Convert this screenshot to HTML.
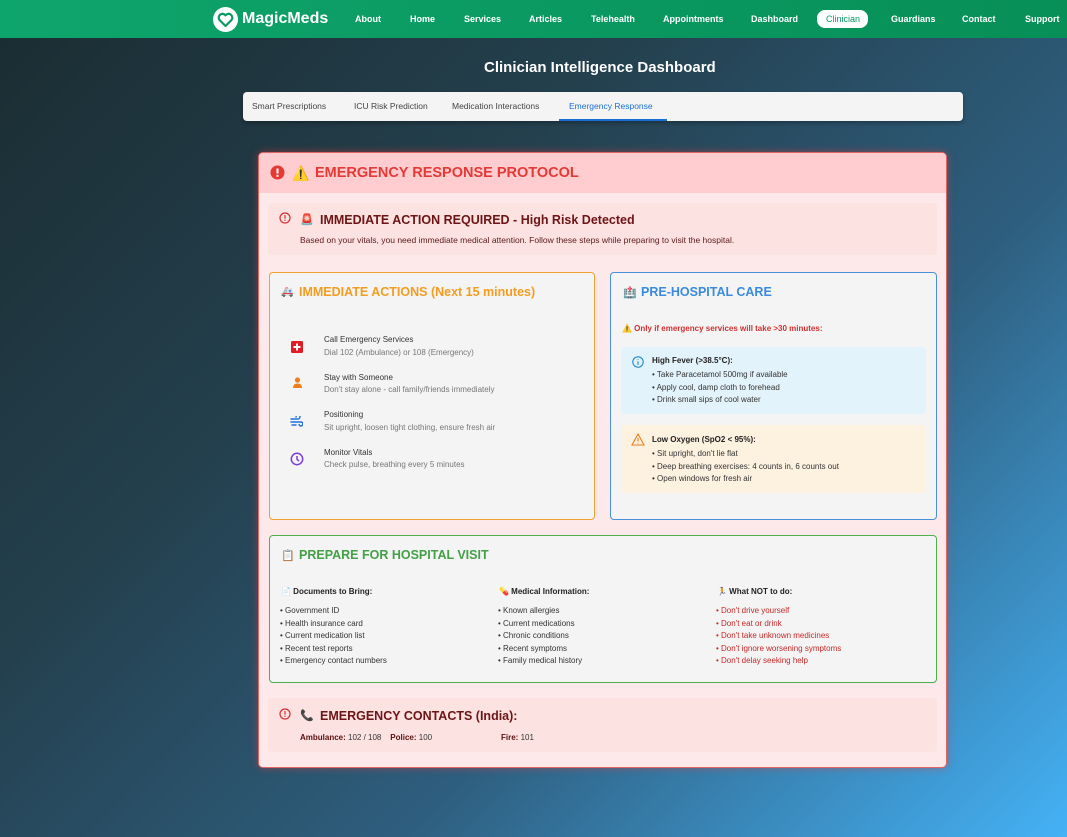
<!DOCTYPE html>
<html><head><meta charset="utf-8"><style>
*{margin:0;padding:0;box-sizing:border-box}
body{width:1067px;height:837px;overflow:hidden;font-family:"Liberation Sans","DejaVu Sans",sans-serif;background:linear-gradient(135deg,#1a2c31 0%,#24404e 35%,#2e5e7e 65%,#45b2f6 100%);position:relative;color:#333}
.a{position:absolute;white-space:nowrap}
.hdr{position:absolute;left:0;top:0;width:1067px;height:38px;background:linear-gradient(90deg,#0ea56c,#078f57)}
.nav{font-size:9px;font-weight:bold;color:#fff;top:14px}
.tabs{left:243px;top:92px;width:720px;height:29px;background:#f4f4f4;border-radius:4px;box-shadow:0 2px 4px rgba(0,0,0,.3)}
.tab{font-size:8.5px;color:#444;top:101px}
.card{left:258px;top:152px;width:689px;height:616px;background:#fde9e9;border:1px solid #e06565;border-radius:5px;box-shadow:0 0 8px rgba(230,60,60,.5);overflow:hidden}
.box{border-radius:4px;background:#f4f4f4}
.it{font-size:8px;color:#333}
.sub{font-size:8px;color:#777}
.li{font-size:8px;color:#333;line-height:12.5px}
</style></head><body>
<div class="hdr"></div>
<svg class="a" style="left:213px;top:7px" width="25" height="25" viewBox="0 0 25 25"><circle cx="12.5" cy="12.5" r="12.5" fill="#fff"/><path d="M12.5 19 L6.5 13 A3.4 3.4 0 0 1 12.5 8.3 A3.4 3.4 0 0 1 18.5 13 Z" fill="none" stroke="#0a9a62" stroke-width="2.2" stroke-linejoin="round"/></svg>
<div class="a" style="left:242px;top:10px;font-size:16px;font-weight:bold;color:#fff">MagicMeds</div>
<div class="a nav" style="left:355px">About</div>
<div class="a nav" style="left:410px">Home</div>
<div class="a nav" style="left:464px">Services</div>
<div class="a nav" style="left:529px">Articles</div>
<div class="a nav" style="left:591px">Telehealth</div>
<div class="a nav" style="left:663px">Appointments</div>
<div class="a nav" style="left:751px">Dashboard</div>
<div class="a" style="left:817px;top:10px;width:51px;height:18px;background:#fff;border-radius:8px"></div>
<div class="a nav" style="left:826px;color:#0a9a62;font-weight:normal">Clinician</div>
<div class="a nav" style="left:891px">Guardians</div>
<div class="a nav" style="left:962px">Contact</div>
<div class="a nav" style="left:1025px">Support</div>
<div class="a" style="left:484px;top:59px;font-size:15px;font-weight:bold;color:#fff">Clinician Intelligence Dashboard</div>
<div class="a tabs"></div>
<div class="a tab" style="left:252px">Smart Prescriptions</div>
<div class="a tab" style="left:354px">ICU Risk Prediction</div>
<div class="a tab" style="left:452px">Medication Interactions</div>
<div class="a tab" style="left:569px;color:#1a6fd6">Emergency Response</div>
<div class="a" style="left:559px;top:119px;width:108px;height:2px;background:#1a6fd6"></div>

<div class="a card">
 <div class="a" style="left:0;top:0;width:689px;height:40px;background:#ffcdd0"></div>
</div>
<svg class="a" style="left:270px;top:165px" width="15" height="15"><circle cx="7.5" cy="7.5" r="7" fill="#e53935"/><rect x="6.5" y="3.5" width="2" height="5" fill="#fff"/><rect x="6.5" y="9.8" width="2" height="2" fill="#fff"/></svg>
<div class="a" style="left:292px;top:165px;font-size:14px">⚠️</div>
<div class="a" style="left:315px;top:165px;font-size:14.5px;font-weight:bold;color:#e53935">EMERGENCY RESPONSE PROTOCOL</div>

<div class="a" style="left:268px;top:203px;width:669px;height:52px;background:#fde2e2;border-radius:4px"></div>
<svg class="a" style="left:279px;top:212px" width="12" height="12"><circle cx="6" cy="6" r="5" fill="none" stroke="#d32f2f" stroke-width="1.2"/><rect x="5.4" y="3" width="1.2" height="3.6" fill="#d32f2f"/><rect x="5.4" y="7.6" width="1.2" height="1.2" fill="#d32f2f"/></svg>
<div class="a" style="left:300px;top:213px;font-size:11px">🚨</div>
<div class="a" style="left:320px;top:213px;font-size:12.5px;font-weight:bold;color:#6d1414">IMMEDIATE ACTION REQUIRED - High Risk Detected</div>
<div class="a" style="left:300px;top:235px;font-size:8.5px;color:#5a1a1a">Based on your vitals, you need immediate medical attention. Follow these steps while preparing to visit the hospital.</div>

<div class="a box" style="left:269px;top:272px;width:326px;height:248px;border:1px solid #f0a030"></div>
<div class="a" style="left:281px;top:287px;font-size:10px">🚑</div>
<div class="a" style="left:299px;top:285px;font-size:12.5px;font-weight:bold;color:#f39c1f">IMMEDIATE ACTIONS (Next 15 minutes)</div>
<svg class="a" style="left:291px;top:341px" width="12" height="12"><rect width="12" height="12" rx="1.5" fill="#e01b24"/><rect x="5" y="2.5" width="2" height="7" fill="#fff"/><rect x="2.5" y="5" width="7" height="2" fill="#fff"/></svg>
<div class="a it" style="left:324px;top:335px">Call Emergency Services</div>
<div class="a sub" style="left:324px;top:348px">Dial 102 (Ambulance) or 108 (Emergency)</div>
<svg class="a" style="left:292px;top:377px" width="11" height="11"><circle cx="5.5" cy="3" r="2.6" fill="#ef7d1a"/><path d="M1 11 Q1 6.5 5.5 6.5 Q10 6.5 10 11Z" fill="#ef7d1a"/></svg>
<div class="a it" style="left:324px;top:373px">Stay with Someone</div>
<div class="a sub" style="left:324px;top:385px">Don't stay alone - call family/friends immediately</div>
<svg class="a" style="left:290px;top:416px" width="13" height="11" fill="none" stroke="#1e6fe0" stroke-width="1.4" stroke-linecap="round"><path d="M1 3H8A2 2 0 1 0 6 1"/><path d="M1 6H11A2 2 0 1 1 9 8.5"/><path d="M2 9H6"/></svg>
<div class="a it" style="left:324px;top:410px">Positioning</div>
<div class="a sub" style="left:324px;top:423px">Sit upright, loosen tight clothing, ensure fresh air</div>
<svg class="a" style="left:290px;top:452px" width="14" height="14" fill="none" stroke="#7b3fd6" stroke-width="1.5"><circle cx="7" cy="7" r="5.7"/><path d="M7 4V7.3L9 9"/></svg>
<div class="a it" style="left:324px;top:448px">Monitor Vitals</div>
<div class="a sub" style="left:324px;top:460px">Check pulse, breathing every 5 minutes</div>

<div class="a box" style="left:610px;top:272px;width:327px;height:248px;border:1px solid #4a8fd9"></div>
<div class="a" style="left:623px;top:286px;font-size:11px">🏥</div>
<div class="a" style="left:641px;top:285px;font-size:12.5px;font-weight:bold;color:#3a8be0">PRE-HOSPITAL CARE</div>
<div class="a" style="left:622px;top:324px;font-size:8px;font-weight:bold;color:#d32f2f">⚠️ Only if emergency services will take &gt;30 minutes:</div>
<div class="a" style="left:621px;top:347px;width:305px;height:67px;background:#e3f3fb;border-radius:4px"></div>
<svg class="a" style="left:632px;top:356px" width="12" height="12" fill="none" stroke="#1e88d0" stroke-width="1.1"><circle cx="6" cy="6" r="5.2"/><path d="M6 5.2V9M6 3V3.8"/></svg>
<div class="a" style="left:652px;top:356px;font-size:8px;font-weight:bold;color:#222">High Fever (&gt;38.5°C):</div>
<div class="a li" style="left:652px;top:369px">• Take Paracetamol 500mg if available<br>• Apply cool, damp cloth to forehead<br>• Drink small sips of cool water</div>
<div class="a" style="left:621px;top:425px;width:305px;height:68px;background:#fdf1e0;border-radius:4px"></div>
<svg class="a" style="left:631px;top:433px" width="14" height="13" fill="none" stroke="#ef7d1a" stroke-width="1.1"><path d="M7 1L13 12H1Z"/><path d="M7 5V8.5M7 9.7V10.5"/></svg>
<div class="a" style="left:652px;top:435px;font-size:8px;font-weight:bold;color:#222">Low Oxygen (SpO2 &lt; 95%):</div>
<div class="a li" style="left:652px;top:448px">• Sit upright, don't lie flat<br>• Deep breathing exercises: 4 counts in, 6 counts out<br>• Open windows for fresh air</div>

<div class="a box" style="left:269px;top:535px;width:668px;height:148px;border:1px solid #4caf50"></div>
<div class="a" style="left:281px;top:549px;font-size:11px">📋</div>
<div class="a" style="left:299px;top:548px;font-size:12.5px;font-weight:bold;color:#43a047">PREPARE FOR HOSPITAL VISIT</div>
<div class="a" style="left:281px;top:587px;font-size:8px;font-weight:bold;color:#222">📄 Documents to Bring:</div>
<div class="a li" style="left:280px;top:605px">• Government ID<br>• Health insurance card<br>• Current medication list<br>• Recent test reports<br>• Emergency contact numbers</div>
<div class="a" style="left:499px;top:587px;font-size:8px;font-weight:bold;color:#222">💊 Medical Information:</div>
<div class="a li" style="left:498px;top:605px">• Known allergies<br>• Current medications<br>• Chronic conditions<br>• Recent symptoms<br>• Family medical history</div>
<div class="a" style="left:717px;top:587px;font-size:8px;font-weight:bold;color:#222">🏃 What NOT to do:</div>
<div class="a li" style="left:716px;top:605px;color:#c62828">• Don't drive yourself<br>• Don't eat or drink<br>• Don't take unknown medicines<br>• Don't ignore worsening symptoms<br>• Don't delay seeking help</div>

<div class="a" style="left:268px;top:698px;width:669px;height:54px;background:#fde2e2;border-radius:4px"></div>
<svg class="a" style="left:279px;top:708px" width="12" height="12"><circle cx="6" cy="6" r="5" fill="none" stroke="#d32f2f" stroke-width="1.2"/><rect x="5.4" y="3" width="1.2" height="3.6" fill="#d32f2f"/><rect x="5.4" y="7.6" width="1.2" height="1.2" fill="#d32f2f"/></svg>
<div class="a" style="left:300px;top:709px;font-size:11px">📞</div>
<div class="a" style="left:320px;top:709px;font-size:12.5px;font-weight:bold;color:#6d1414">EMERGENCY CONTACTS (India):</div>
<div class="a" style="left:300px;top:733px;font-size:8px;color:#333"><b style="color:#5a1010">Ambulance:</b> 102 / 108 &nbsp;&nbsp; <b style="color:#5a1010">Police:</b> 100</div>
<div class="a" style="left:501px;top:733px;font-size:8px;color:#333"><b style="color:#5a1010">Fire:</b> 101</div>
</body></html>
